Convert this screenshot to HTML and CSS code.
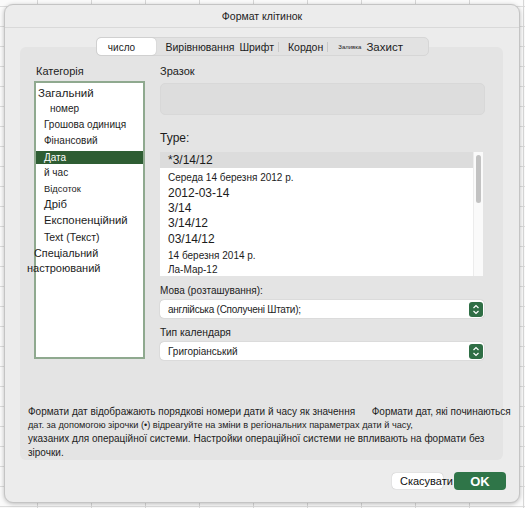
FILE: index.html
```html
<!DOCTYPE html>
<html lang="uk">

<head>
    <meta charset="UTF-8">
    <meta name="viewport" content="width=device-width, initial-scale=1.0">
    <title>Формат клітинок</title>
    <link rel="stylesheet" href="styles.css">
</head>

<body>
    <div class="dialog">
        <div class="titlebar">Формат клітинок</div>

        <div class="tabs">
            <span class="tab tab-active">число</span>
            <span class="tab tab-align">Вирівнювання</span>
            <span class="tab tab-font">Шрифт</span>
            <span class="sep"></span>
            <span class="tab tab-border">Кордон</span>
            <span class="sep"></span>
            <span class="tab tab-fill">Заливка</span>
            <span class="tab tab-protect">Захист</span>
        </div>

        <div class="panel">
            <div class="columns">
                <div class="left">
                    <div class="label">Категорія</div>
                    <div class="catlist">
                        <div class="cat c-general">Загальний</div>
                        <div class="cat c-number">номер</div>
                        <div class="cat c-money">Грошова одиниця</div>
                        <div class="cat c-finance">Фінансовий</div>
                        <div class="cat c-selected">Дата</div>
                        <div class="cat c-time">й час</div>
                        <div class="cat c-tiny">Відсоток</div>
                        <div class="cat c-big">Дріб</div>
                        <div class="cat c-big">Експоненційний</div>
                        <div class="cat c-text">Text (Текст)</div>
                        <div class="cat c-special">Спеціальний</div>
                        <div class="cat c-custom">настроюваний</div>
                    </div>
                </div>

                <div class="right">
                    <div class="label">Зразок</div>
                    <div class="sample"></div>

                    <div class="label label-type">Type:</div>
                    <div class="typelist">
                        <div class="rows">
                            <div class="row row-selected">*3/14/12</div>
                            <div class="row row-long">Середа 14 березня 2012 р.</div>
                            <div class="row">2012-03-14</div>
                            <div class="row">3/14</div>
                            <div class="row">3/14/12</div>
                            <div class="row row-tall">03/14/12</div>
                            <div class="row row-long row-gap">14 березня 2014 р.</div>
                            <div class="row row-last">Ла-Мар-12</div>
                        </div>
                        <div class="scroll"><div class="thumb"></div></div>
                    </div>

                    <div class="label label-lang">Мова (розташування):</div>
                    <div class="select">
                        <span class="select-lang">англійська (Сполучені Штати);</span>
                        <svg class="stepper" width="14" height="15" viewBox="0 0 14 15">
                            <rect width="14" height="15" rx="3" fill="#2f6e45"/>
                            <path d="M4.5 6 L7 3.5 L9.5 6 M4.5 9 L7 11.5 L9.5 9" stroke="#fff" stroke-width="1.2" fill="none"/>
                        </svg>
                    </div>

                    <div class="label label-cal">Тип календаря</div>
                    <div class="select">
                        <span>Григоріанський</span>
                        <svg class="stepper" width="14" height="15" viewBox="0 0 14 15">
                            <rect width="14" height="15" rx="3" fill="#2f6e45"/>
                            <path d="M4.5 6 L7 3.5 L9.5 6 M4.5 9 L7 11.5 L9.5 9" stroke="#fff" stroke-width="1.2" fill="none"/>
                        </svg>
                    </div>
                </div>
            </div>

            <div class="note">
                <div class="line">Формати дат відображають порядкові номери дати й часу як значення&nbsp;&nbsp;&nbsp;&nbsp;&nbsp;&nbsp;Формати дат, які починаються</div>
                <div class="line line-small">дат. за допомогою зірочки (•) відреагуйте на зміни в регіональних параметрах дати й часу,</div>
                <div class="line">указаних для операційної системи. Настройки операційної системи не впливають на формати без</div>
                <div class="line">зірочки.</div>
            </div>
        </div>

        <div class="buttons">
            <button class="btn btn-cancel">Скасувати</button>
            <button class="btn btn-ok">OK</button>
        </div>
    </div>
</body>
</html>
```

FILE: styles.css
```css
body {
    margin: 0;
    padding: 4px 5px 0 4px;
    font-family: "Liberation Sans", Arial, sans-serif;
    color: #1c1c1c;
    background-color: #fafafa;
    background-image:
        linear-gradient(to right, #d6d6d6 1px, transparent 1px),
        linear-gradient(to bottom, #dcdcdc 1px, transparent 1px);
    background-size: 54px 20px;
    background-position: 37px 6px;
    height: 508px;
    box-sizing: border-box;
    overflow: hidden;
}

.dialog {
    width: 516px;
    height: 499px;
    box-sizing: border-box;
    background: #ececec;
    border: 1px solid #c4c4c4;
    border-radius: 9px;
    box-shadow: 0 1px 4px rgba(0, 0, 0, 0.25);
    display: flex;
    flex-direction: column;
}

.titlebar {
    height: 22px;
    line-height: 22px;
    text-align: center;
    font-size: 10.5px;
    border-bottom: 1px solid #d9d9d9;
}

/* segmented tab control */
.tabs {
    align-self: center;
    margin-top: 9px;
    margin-bottom: -9px;
    position: relative;
    z-index: 1;
    display: flex;
    align-items: center;
    height: 19px;
    width: 333px;
    box-sizing: border-box;
    background: #e2e2e2;
    border: 1px solid #d6d6d6;
    border-radius: 5px;
    font-size: 10.5px;
}

.tab {
    white-space: nowrap;
    line-height: 16px;
}

.tab-active {
    background: #fff;
    width: 59px;
    height: 17px;
    box-sizing: border-box;
    padding-right: 9px;
    border-radius: 4px;
    text-align: center;
    font-size: 10px;
    line-height: 20px;
    box-shadow: 0 0 1px rgba(0, 0, 0, 0.3);
}

.tab-align { margin-left: 10px; }
.tab-font { margin-left: 5px; }
.tab-border { margin-left: 9px; }
.tab-fill { margin-left: 10px; font-size: 6px; }
.tab-protect { margin-left: 5px; font-size: 11.5px; }

.sep {
    width: 1px;
    height: 10px;
    background: #c8c8c8;
    margin-left: 4px;
}

.panel {
    margin: 0 16px 0 15px;
    height: 413px;
    box-sizing: border-box;
    background: #e4e4e4;
    border-radius: 6px;
    padding-top: 18px;
}

.columns {
    display: flex;
}

.left {
    width: 125px;
    padding-left: 14px;
    box-sizing: border-box;
}

.right {
    width: 325px;
    margin-left: 15px;
}

.label {
    font-size: 11px;
    line-height: 13px;
    height: 13px;
    white-space: nowrap;
}

.left .label {
    margin-left: 2px;
}

/* category list */
.catlist {
    margin-top: 3px;
    width: 111px;
    height: 278px;
    box-sizing: border-box;
    background: #fff;
    border: 2px solid #8fa98f;
    padding-top: 2px;
    font-size: 10px;
}

.cat {
    white-space: nowrap;
    padding-left: 8px;
    height: 16px;
    line-height: 16px;
}

.c-general { font-size: 11.5px; padding-left: 2px; }
.c-number { padding-left: 14px; }
.c-money { height: 15px; line-height: 15px; }
.c-finance { height: 17px; line-height: 17px; }
.c-selected {
    background: #2e5d33;
    color: #fff;
    height: 13px;
    line-height: 14px;
    margin-top: 2px;
}
.c-time { height: 18px; line-height: 18px; }
.c-tiny { font-size: 9.3px; height: 14px; line-height: 14px; }
.c-big { font-size: 11.3px; }
.c-text { font-size: 10.5px; height: 18px; line-height: 18px; }
.c-special { font-size: 10.8px; padding-left: 0; margin-left: -2px; height: 14px; line-height: 14px; }
.c-custom { font-size: 11px; padding-left: 0; margin-left: -9px; }

.sample {
    margin-top: 5px;
    height: 32px;
    background: #dddddd;
    border-radius: 5px;
    border: 1px solid #d8d8d8;
    box-sizing: border-box;
}

.label-type {
    margin-top: 17px;
    font-size: 12px;
}

/* format type list */
.typelist {
    margin-top: 7px;
    width: 323px;
    height: 124px;
    display: flex;
    background: #fff;
    overflow: hidden;
}

.rows {
    flex: 1;
    font-size: 12px;
}

.row {
    white-space: nowrap;
    padding-left: 8px;
    height: 15px;
    line-height: 15px;
}

.row-selected { background: #dcdcdc; height: 16px; line-height: 16px; margin-bottom: 1px; }
.row-long { font-size: 10px; height: 17px; line-height: 18px; }
.row-tall { height: 16px; line-height: 16px; }
.row-last { font-size: 10px; height: 12px; line-height: 12px; }

.scroll {
    width: 10px;
    background: #fafafa;
    border-left: 1px solid #ececec;
    padding-top: 3px;
    box-sizing: border-box;
}

.thumb {
    width: 5px;
    margin-left: 2px;
    height: 48px;
    background: #c2c2c2;
    border-radius: 3px;
}

.label-lang { margin-top: 8px; font-size: 10px; }
.label-cal { margin-top: 8px; font-size: 10.3px; }

.select {
    margin-top: 3px;
    width: 324px;
    height: 18px;
    box-sizing: border-box;
    background: #fff;
    border-radius: 4px;
    box-shadow: 0 0 1px rgba(0, 0, 0, 0.35);
    display: flex;
    align-items: center;
    justify-content: space-between;
    padding: 0 1px 0 8px;
    font-size: 10px;
}

.select-lang {
    letter-spacing: -0.25px;
}

.stepper {
    display: block;
}

.note {
    margin-top: 45px;
    padding-left: 8px;
    font-size: 10px;
}

.line {
    white-space: nowrap;
    height: 13.7px;
    line-height: 13.7px;
}

.line-small { font-size: 9.2px; }

.buttons {
    display: flex;
    justify-content: flex-end;
    align-items: center;
    gap: 11px;
    padding: 12px 13px 0 0;
}

.btn {
    font-family: "Liberation Sans", Arial, sans-serif;
    border: none;
    border-radius: 4px;
    font-size: 11px;
    padding: 0;
    white-space: nowrap;
    box-sizing: border-box;
}

.btn-cancel {
    width: 51px;
    height: 16px;
    background: #fff;
    color: #111;
    box-shadow: 0 0 1px rgba(0, 0, 0, 0.35);
    text-align: left;
    padding-left: 8px;
    overflow: visible;
}

.btn-ok {
    width: 52px;
    height: 18px;
    background: #2f7548;
    color: #fff;
    font-size: 13px;
    font-weight: bold;
}
```
